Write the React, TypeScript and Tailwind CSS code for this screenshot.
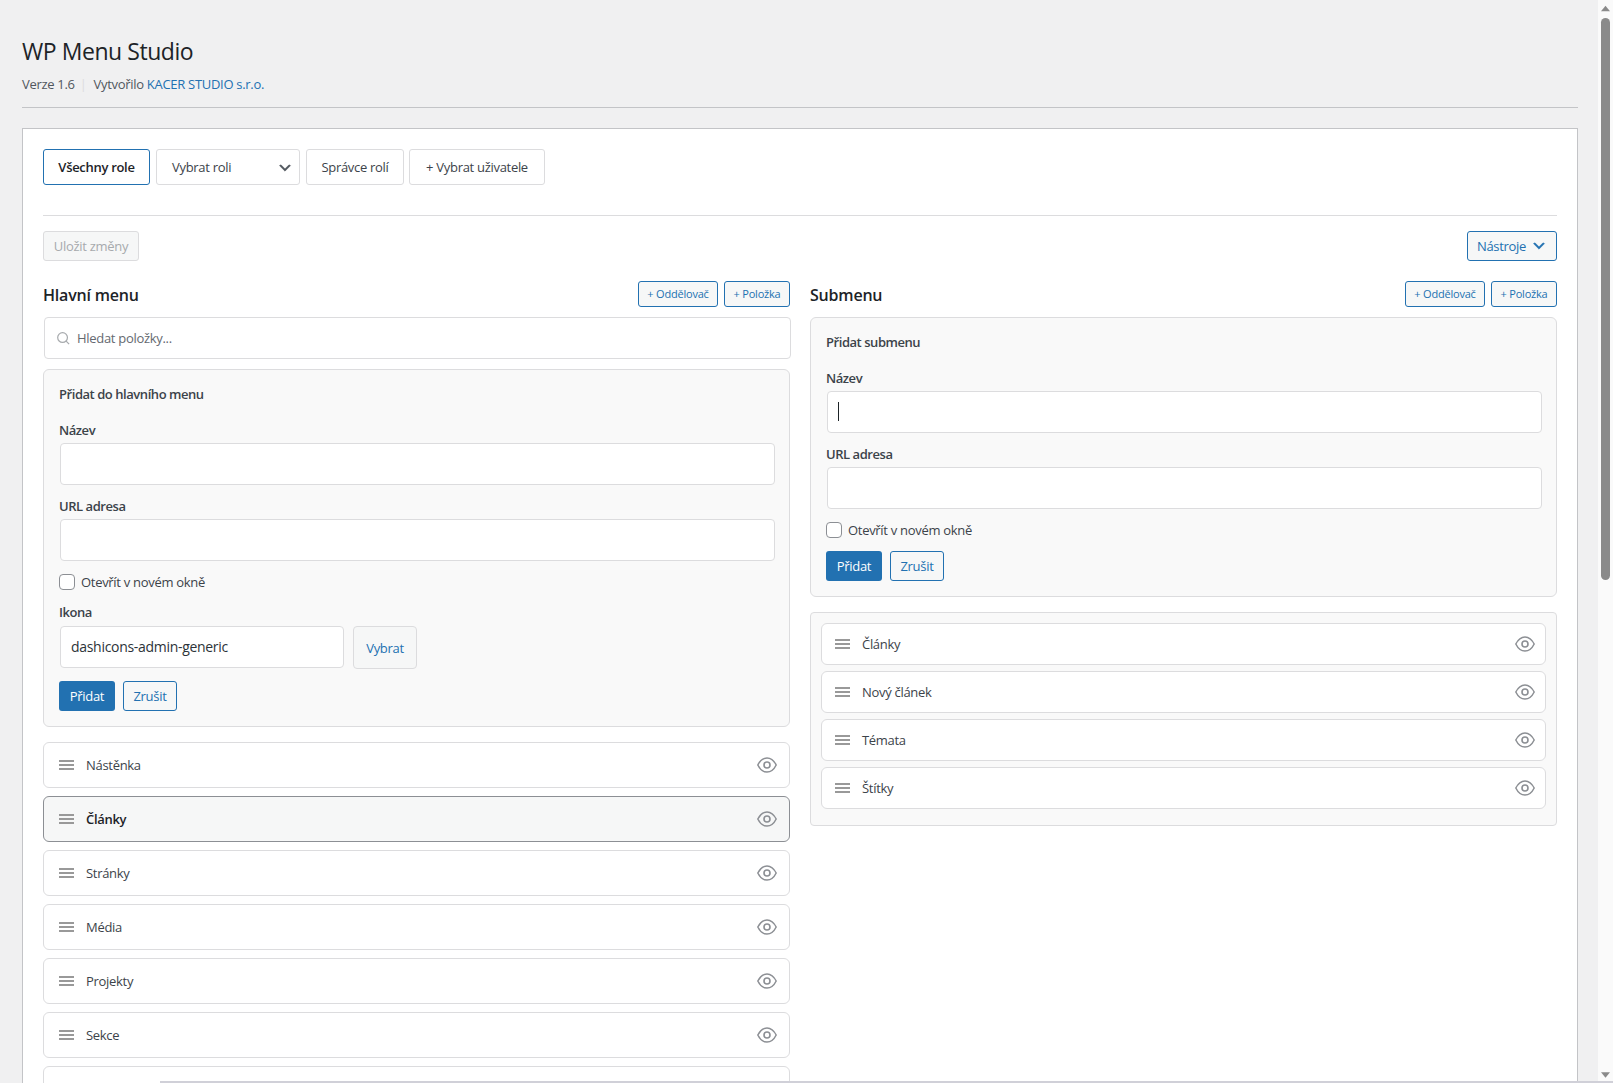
import React from "react";

const mainItems = ["Nástěnka", "Články", "Stránky", "Média", "Projekty", "Sekce", ""];
const subItems = ["Články", "Nový článek", "Témata", "Štítky"];

function Grip() {
  return (
    <div className="flex w-[15px] shrink-0 flex-col gap-[2px]">
      <span className="h-[2px] bg-[#999]" />
      <span className="h-[2px] bg-[#999]" />
      <span className="h-[2px] bg-[#999]" />
    </div>
  );
}

function Eye() {
  return (
    <svg viewBox="0 0 20 20" className="h-5 w-5 shrink-0 text-[#8c8f94]" fill="none" stroke="currentColor">
      <path d="M0.8 10C3 5.6 6.5 2.9 10 2.9S17 5.6 19.2 10C17 14.4 13.5 17.1 10 17.1S3 14.4 0.8 10Z" strokeWidth="1.5" strokeLinejoin="round" />
      <circle cx="10" cy="10" r="3" strokeWidth="1.6" />
    </svg>
  );
}

function Chevron({ className }: { className: string }) {
  return (
    <svg viewBox="0 0 20 20" className={className} fill="currentColor" stroke="currentColor" strokeWidth="0.5">
      <path d="M5 6l5 5 5-5 2 1-7 7-7-7 2-1z" />
    </svg>
  );
}

function Row({ label, active, small }: { label: string; active?: boolean; small?: boolean }) {
  return (
    <div
      className={
        "flex items-center rounded-md border text-[13px] " +
        (small ? "h-[42px] pr-[10px] pl-[13px] " : "h-[46px] pr-3 pl-[15px] ") +
        (active ? "border-[#8c8f94] bg-[#f6f7f7] font-semibold text-[#1d2327]" : "border-[#dcdcde] bg-white text-[#3c434a]")
      }
    >
      <Grip />
      <span className="ml-3 flex-1 pt-px">{label}</span>
      <Eye />
    </div>
  );
}

function SectionHeader({ title }: { title: string }) {
  return (
    <div className="flex h-[26px] items-center justify-between">
      <h2 className="pt-[2px] text-[16px] font-semibold tracking-[-0.2px] text-[#1d2327]">{title}</h2>
      <div className="flex gap-[6px]">
        <button className="h-[26px] w-[80px] rounded-[3px] border border-[#2271b1] bg-[#f6f7f7] text-[11px] tracking-[-0.2px] text-[#2271b1]">+ Oddělovač</button>
        <button className="h-[26px] w-[66px] rounded-[3px] border border-[#2271b1] bg-[#f6f7f7] text-[11px] tracking-[-0.2px] text-[#2271b1]">+ Položka</button>
      </div>
    </div>
  );
}

function Field({ label, caret }: { label: string; caret?: boolean }) {
  return (
    <>
      <label className="mt-3 block text-[13px] leading-[18px] font-semibold tracking-[-0.45px] text-[#3c434a] first-of-type:mt-[18px]">{label}</label>
      <div className="relative mt-1 ml-px -mr-px">
        <input className="block h-[42px] w-full rounded border border-[#dcdcde] bg-white px-[10px] text-[14px] outline-none" />
        {caret && <span className="absolute top-[11px] left-[11px] h-[19px] w-px bg-[#1d2327]" />}
      </div>
    </>
  );
}

function NewTab() {
  return (
    <label className="mt-[13px] flex h-4 items-center gap-[6px] text-[13px] text-[#3c434a]">
      <input type="checkbox" className="h-4 w-4 appearance-none rounded border border-[#8c8f94] bg-white" />
      <span className="pt-[2px]">Otevřít v novém okně</span>
    </label>
  );
}

function Actions({ tight }: { tight?: boolean }) {
  return (
    <div className={tight ? "mt-3 flex gap-2" : "mt-[13px] flex gap-2"}>
      <button className="h-[30px] w-[56px] rounded-[3px] bg-[#2271b1] pt-px text-[13px] text-white">Přidat</button>
      <button className="h-[30px] w-[54px] rounded-[3px] border border-[#2271b1] bg-[#f6f7f7] pt-px text-[13px] text-[#2271b1]">Zrušit</button>
    </div>
  );
}

export default function App() {
  return (
    <div className="relative flex h-screen overflow-hidden bg-[#f0f0f1] font-['Open_Sans',sans-serif] tracking-[-0.3px] text-[#3c434a]">
      <main className="h-full min-w-0 flex-1 overflow-hidden pt-[37px] pr-5 pl-[22px]">
        <h1 className="text-[23px] leading-[29px] font-normal tracking-[-0.45px] text-[#1d2327]">WP Menu Studio</h1>
        <p className="mt-2 text-[13px] leading-5 text-[#50575e]">
          Verze 1.6
          <span className="mr-[7px] ml-[5px] text-[#dcdcde]">|</span>
          Vytvořilo <a className="text-[#2271b1]">KACER STUDIO s.r.o.</a>
        </p>
        <hr className="mt-[13px] border-[#c3c4c7]" />

        <div className="mt-5 border border-[#c3c4c7] bg-white p-5">
          <div className="flex text-[13px]">
            <button className="h-9 w-[107px] rounded-[3px] border border-[#2271b1] bg-white pt-px font-semibold text-[#1d2327]">Všechny role</button>
            <div className="ml-[6px] flex h-9 w-[144px] items-center justify-between rounded-[3px] border border-[#dcdcde] bg-white pt-px pr-[6px] pl-[15px]">
              Vybrat roli
              <Chevron className="h-4 w-4 text-[#50575e]" />
            </div>
            <button className="ml-[6px] h-9 w-[98px] rounded-[3px] border border-[#dcdcde] bg-white pt-px">Správce rolí</button>
            <button className="ml-[5px] h-9 w-[136px] rounded-[3px] border border-[#dcdcde] bg-white pt-px">+ Vybrat uživatele</button>
          </div>
          <hr className="mt-[30px] border-[#dcdcde]" />

          <div className="mt-[15px] flex items-center justify-between text-[13px]">
            <button className="h-[30px] w-[96px] rounded-[3px] border border-[#dcdcde] bg-[#f6f7f7] pt-px text-[#a7aaad]">Uložit změny</button>
            <button className="flex h-[30px] w-[90px] items-center justify-center gap-[5px] rounded-[3px] border border-[#2271b1] bg-[#f6f7f7] text-[#2271b1]">
              <span className="pt-px">Nástroje</span>
              <Chevron className="h-4 w-4" />
            </button>
          </div>

          <div className="mt-5 grid grid-cols-2 items-start gap-5">
            <section>
              <SectionHeader title="Hlavní menu" />
              <div className="mt-[10px] ml-px -mr-px flex h-[42px] items-center gap-[6px] rounded border border-[#dcdcde] bg-white pl-[11px] text-[13px] text-[#646970]">
                <svg viewBox="0 0 16 16" className="h-[15px] w-[15px] text-[#a7aaad]" fill="none" stroke="currentColor" strokeWidth="1.3">
                  <circle cx="7" cy="7" r="5.2" />
                  <path d="M10.8 10.8L14 14" />
                </svg>
                <span className="pt-px">Hledat položky...</span>
              </div>

              <div className="mt-[10px] rounded-md border border-[#dcdcde] bg-[#f9f9f9] p-[15px]">
                <h3 className="text-[13px] leading-[18px] font-semibold tracking-[-0.45px] text-[#3c434a]">Přidat do hlavního menu</h3>
                <Field label="Název" />
                <Field label="URL adresa" />
                <NewTab />
                <label className="mt-[13px] block text-[13px] leading-[18px] font-semibold tracking-[-0.45px]">Ikona</label>
                <div className="mt-[5px] ml-px flex gap-[9px]">
                  <input
                    readOnly
                    value="dashicons-admin-generic"
                    className="h-[42px] w-[284px] rounded border border-[#dcdcde] bg-white px-[10px] pb-[2px] text-[14px] tracking-[-0.3px] text-[#2c3338] outline-none"
                  />
                  <button className="h-[43px] w-[64px] rounded border border-[#dcdcde] bg-[#f6f7f7] pt-[3px] text-[13px] text-[#2271b1]">Vybrat</button>
                </div>
                <Actions tight />
              </div>

              <div className="mt-[15px] flex flex-col gap-2">
                {mainItems.map((item, i) => (
                  <Row key={i} label={item} active={item === "Články"} />
                ))}
              </div>
            </section>

            <section>
              <SectionHeader title="Submenu" />
              <div className="mt-[10px] rounded-md border border-[#dcdcde] bg-[#f9f9f9] p-[15px]">
                <h3 className="text-[13px] leading-[18px] font-semibold tracking-[-0.45px]">Přidat submenu</h3>
                <Field label="Název" caret />
                <Field label="URL adresa" />
                <NewTab />
                <Actions />
              </div>
              <div className="mt-[15px] flex flex-col gap-[6px] rounded border border-[#dcdcde] bg-[#f9f9f9] px-[10px] pt-[10px] pb-4">
                {subItems.map((item) => (
                  <Row key={item} label={item} small />
                ))}
              </div>
            </section>
          </div>
        </div>
      </main>

      {/* browser scrollbar */}
      <div className="relative h-full w-[15px] shrink-0 bg-[#fafafa]">
        <svg viewBox="0 0 10 6" className="absolute top-[5px] left-[3px] h-[7px] w-[9px] fill-[#8a8a8a]">
          <path d="M5 0L10 6H0Z" />
        </svg>
        <div className="absolute top-[18px] left-[3px] h-[562px] w-[9px] rounded-full bg-[#8a8a8a]" />
        <svg viewBox="0 0 10 6" className="absolute bottom-[5px] left-[3px] h-[6px] w-[9px] fill-[#8a8a8a]">
          <path d="M5 6L0 0H10Z" />
        </svg>
      </div>

      {/* window edge along the bottom of the capture */}
      <div className="absolute right-0 bottom-0 left-[160px] h-[2px] bg-[#d0d0d8]" />
    </div>
  );
}
